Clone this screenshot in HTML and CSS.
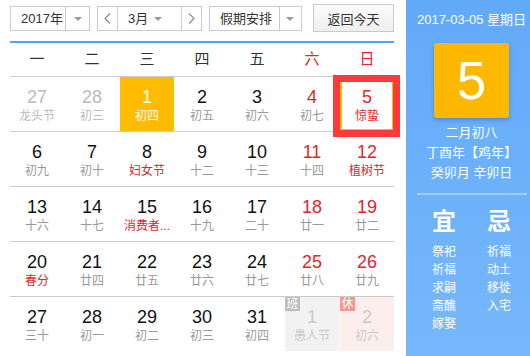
FILE: index.html
```html
<!DOCTYPE html>
<html lang="zh-CN">
<head>
  <meta charset="UTF-8">
  <meta name="viewport" content="width=device-width, initial-scale=1.0">
  <title>万年历</title>
  <link rel="stylesheet" href="styles.css">
</head>
<body>
  <div class="calendar">
    <div class="main">
      <div class="toolbar">
        <div class="select year-select">
          <span class="select-text">2017年</span>
          <span class="select-arrow"><i class="tri"></i></span>
        </div>
        <div class="select month-select">
          <span class="nav-btn"><svg width="7" height="11" viewBox="0 0 7 11"><polyline points="6,0.5 1,5.5 6,10.5" fill="none" stroke="#888" stroke-width="1.1"/></svg></span>
          <span class="select-text month-text">3月</span>
          <span class="month-arrow"><i class="tri"></i></span>
          <span class="nav-btn"><svg width="7" height="11" viewBox="0 0 7 11"><polyline points="1,0.5 6,5.5 1,10.5" fill="none" stroke="#888" stroke-width="1.1"/></svg></span>
        </div>
        <div class="select holiday-select">
          <span class="select-text">假期安排</span>
          <span class="select-arrow"><i class="tri"></i></span>
        </div>
        <button class="today-btn">返回今天</button>
      </div>

      <div class="weekdays">
        <span>一</span><span>二</span><span>三</span><span>四</span><span>五</span><span class="red">六</span><span class="red">日</span>
      </div>

      <div class="week">
        <div class="day other"><b>27</b><em>龙头节</em></div>
        <div class="day other"><b>28</b><em>初三</em></div>
        <div class="day today"><b>1</b><em>初四</em></div>
        <div class="day"><b>2</b><em>初五</em></div>
        <div class="day"><b>3</b><em>初六</em></div>
        <div class="day weekend"><b>4</b><em>初七</em></div>
        <div class="day weekend selected"><b>5</b><em class="fest">惊蛰</em></div>
      </div>
      <div class="week">
        <div class="day"><b>6</b><em>初九</em></div>
        <div class="day"><b>7</b><em>初十</em></div>
        <div class="day"><b>8</b><em class="fest">妇女节</em></div>
        <div class="day"><b>9</b><em>十二</em></div>
        <div class="day"><b>10</b><em>十三</em></div>
        <div class="day weekend"><b>11</b><em>十四</em></div>
        <div class="day weekend"><b>12</b><em class="fest">植树节</em></div>
      </div>
      <div class="week">
        <div class="day"><b>13</b><em>十六</em></div>
        <div class="day"><b>14</b><em>十七</em></div>
        <div class="day"><b>15</b><em class="fest">消费者...</em></div>
        <div class="day"><b>16</b><em>十九</em></div>
        <div class="day"><b>17</b><em>二十</em></div>
        <div class="day weekend"><b>18</b><em>廿一</em></div>
        <div class="day weekend"><b>19</b><em>廿二</em></div>
      </div>
      <div class="week">
        <div class="day"><b>20</b><em class="fest">春分</em></div>
        <div class="day"><b>21</b><em>廿四</em></div>
        <div class="day"><b>22</b><em>廿五</em></div>
        <div class="day"><b>23</b><em>廿六</em></div>
        <div class="day"><b>24</b><em>廿七</em></div>
        <div class="day weekend"><b>25</b><em>廿八</em></div>
        <div class="day weekend"><b>26</b><em>廿九</em></div>
      </div>
      <div class="week last">
        <div class="day"><b>27</b><em>三十</em></div>
        <div class="day"><b>28</b><em>初一</em></div>
        <div class="day"><b>29</b><em>初二</em></div>
        <div class="day"><b>30</b><em>初三</em></div>
        <div class="day"><b>31</b><em>初四</em></div>
        <div class="day next work"><span class="badge">班</span><b>1</b><em>愚人节</em></div>
        <div class="day next rest"><span class="badge">休</span><b>2</b><em>初六</em></div>
      </div>
    </div>

    <div class="side">
      <div class="side-date">2017-03-05 星期日</div>
      <div class="big-day">5</div>
      <div class="lunar">二月初八</div>
      <div class="lunar">丁酉年【鸡年】</div>
      <div class="lunar">癸卯月 辛卯日</div>
      <div class="divider"></div>
      <div class="yiji">
        <div class="yiji-col">
          <div class="yiji-title">宜</div>
          <div>祭祀</div><div>祈福</div><div>求嗣</div><div>斋醮</div><div>嫁娶</div>
        </div>
        <div class="yiji-col">
          <div class="yiji-title">忌</div>
          <div>祈福</div><div>动土</div><div>移徙</div><div>入宅</div>
        </div>
      </div>
    </div>
  </div>
</body>
</html>
```

FILE: styles.css
```css
body { margin: 0; background: #fff; font-family: "Liberation Sans", "Noto Sans CJK SC", sans-serif; color: #333; }
.calendar { display: flex; width: 530px; height: 356px; overflow: hidden; }
.main { width: 384px; padding-left: 10px; flex: none; }

.toolbar { display: flex; align-items: flex-start; height: 35px; padding-top: 6px; border-bottom: 2px solid #4ba6f8; }
.select { display: flex; height: 25px; box-sizing: border-box; border: 1px solid #cbcbcb; font-size: 13px; line-height: 23px; background: #fff; }
.select-text { padding-left: 10px; }
.select-arrow { display: flex; align-items: center; justify-content: center; border-left: 1px solid #cbcbcb; }
.tri { display: block; width: 0; height: 0; border-left: 4px solid transparent; border-right: 4px solid transparent; border-top: 4px solid #999; }
.year-select { width: 80px; margin-right: 7px; }
.year-select .select-text { width: 45px; }
.year-select .select-arrow { width: 23px; }
.month-select { width: 105px; margin-right: 7px; }
.nav-btn { display: flex; align-items: center; justify-content: center; width: 21px; }
.nav-btn:first-child { border-right: 1px solid #cbcbcb; }
.nav-btn:last-child { border-left: 1px solid #cbcbcb; }
.month-text { width: 29px; }
.month-arrow { display: flex; align-items: center; width: 30px; padding-left: 0; }
.holiday-select { width: 93px; margin-right: 11px; }
.holiday-select .select-text { width: 60px; }
.holiday-select .select-arrow { width: 22px; }
.today-btn { width: 81px; height: 28px; margin-top: -2px; border: 1px solid #cbcbcb; background: linear-gradient(#fbfbfb, #efefef); font-family: inherit; font-size: 13px; color: #333; padding: 0; }

.weekdays { display: grid; grid-template-columns: repeat(7, 54px); column-gap: 1px; height: 33px; line-height: 31px; border-bottom: 1px solid #cccccc; font-size: 15px; text-align: center; color: #333; }
.red { color: #e3252b; }

.week { display: grid; grid-template-columns: repeat(7, 54px); column-gap: 1px; height: 54px; border-bottom: 1px solid #cccccc; }
.week.last { border-bottom: none; }
.day { position: relative; text-align: center; box-sizing: border-box; }
.day b { display: block; padding-top: 9px; font-weight: normal; font-size: 18px; line-height: 22px; color: #111; }
.day em { display: block; font-style: normal; font-size: 12px; line-height: 16px; color: #999; white-space: nowrap; }
.day em.fest { color: #e3252b; }
.day.weekend b { color: #e3252b; }
.day.other b, .day.other em { color: #bbbbbb; }
.day.today { background: #ffbb00; }
.day.today b, .day.today em { color: #fff; }
.day.selected { border: 2px solid #ffbb00; }
.day.selected b { padding-top: 7px; }
.day.selected::after { content: ""; position: absolute; left: -9px; top: -4px; right: -8px; bottom: -8px; border: 7px solid #fd3a3a; }
.day.next b, .day.next em { color: #c9c9c9; }
.day.work { background: #f2f2f2; }
.day.rest { background: #fdeeee; }
.badge { position: absolute; left: 0; top: 0; width: 15px; height: 14px; font-size: 12px; line-height: 14px; color: #fff; text-align: center; }
.work .badge { background: #bdbdbd; }
.rest .badge { background: #f7958f; }

.side { flex: none; width: 117px; margin-left: 12px; padding-left: 7px; background: linear-gradient(#62a9f8, #76b8fd); color: #fff; display: flex; flex-direction: column; align-items: center; }
.side-date { margin-top: 10px; font-size: 13px; line-height: 20px; white-space: nowrap; }
.big-day { width: 75px; height: 75px; margin-top: 13px; margin-bottom: 5px; background: #ffb800; border-radius: 3px; box-shadow: 0 2px 4px rgba(0, 0, 0, 0.2); font-size: 53px; line-height: 75px; text-align: center; }
.lunar { font-size: 13px; line-height: 20px; white-space: nowrap; }
.divider { width: 110px; height: 2px; margin-top: 10px; background: rgba(255, 255, 255, 0.35); }
.yiji { display: flex; margin-top: 12px; }
.yiji-col { width: 55px; text-align: center; font-size: 12px; line-height: 18px; }
.yiji-title { font-size: 24px; font-weight: bold; line-height: 30px; margin-bottom: 6px; }
```
